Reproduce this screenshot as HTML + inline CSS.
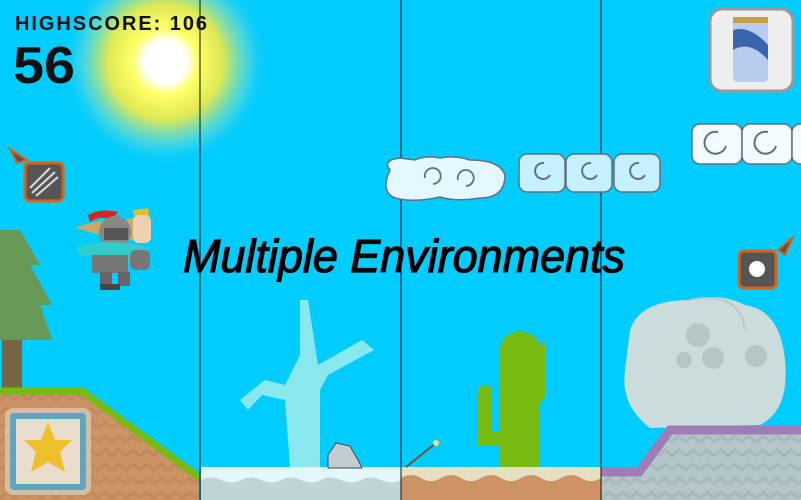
<!DOCTYPE html>
<html><head><meta charset="utf-8"><style>
html,body{margin:0;padding:0;width:801px;height:500px;overflow:hidden;background:#00ccff}
svg{display:block}
</style></head><body>
<svg width="801" height="500" viewBox="0 0 801 500" xmlns="http://www.w3.org/2000/svg">
<defs>
<radialGradient id="sun" cx="165" cy="62" r="105" gradientUnits="userSpaceOnUse">
<stop offset="0" stop-color="#ffffff"/><stop offset="0.2" stop-color="#ffffff"/>
<stop offset="0.32" stop-color="#ffff66"/><stop offset="0.55" stop-color="#dde855"/>
<stop offset="0.8" stop-color="#55d8dd" stop-opacity="0.7"/><stop offset="1" stop-color="#00ccff" stop-opacity="0"/>
</radialGradient>
<pattern id="zzb" width="14" height="14" patternUnits="userSpaceOnUse"><rect width="14" height="14" fill="#cc9466"/><path d="M0 8 L7 2 L14 8" fill="none" stroke="#c08a5c" stroke-width="3"/></pattern>
<pattern id="zzg" width="14" height="14" patternUnits="userSpaceOnUse"><rect width="14" height="14" fill="#b4c6ca"/><path d="M0 8 L7 2 L14 8" fill="none" stroke="#a6b9bd" stroke-width="3"/></pattern>
</defs>
<rect width="801" height="500" fill="#00ccff"/>
<circle cx="165" cy="62" r="105" fill="url(#sun)"/>
<!-- panel 1 -->
<polygon points="0,230 20,230 40,265 30,265 52,305 40,305 52,340 0,340" fill="#669955"/>
<rect x="2" y="340" width="20" height="50" fill="#776644"/>
<polygon points="0,388 82,388 200,475 200,500 0,500" fill="url(#zzb)"/>
<polyline points="0,391 82,391 200,478" fill="none" stroke="#77bb11" stroke-width="7"/>
<rect x="5" y="408" width="86" height="87" rx="8" fill="#d8c8b4" opacity="0.8"/>
<rect x="10" y="413" width="76" height="77" rx="4" fill="#5ea6c0"/>
<rect x="16" y="419" width="64" height="65" fill="#eadccc"/>
<polygon points="48,422 55,440 72,440 60,452 65,472 48,462 31,472 36,452 24,440 41,440" fill="#eec02a"/>
<!-- panel 2 -->
<path d="M300 300 L308 300 L318 365 L362 340 L374 350 L328 375 L320 390 L320 467 L290 467 L285 400 L262 395 L248 410 L240 400 L265 380 L285 385 L300 355 Z" fill="#88e8ee"/>
<rect x="201" y="467" width="200" height="33" fill="#c0d4d8"/>
<path d="M201 467 H401 V480 Q391 485 381 480 Q371 475 361 480 Q351 485 341 480 Q331 475 321 480 Q311 485 301 480 Q291 475 281 480 Q271 485 261 480 Q251 475 241 480 Q231 485 221 480 Q211 475 201 480 Z" fill="#e4f8fc"/>
<polygon points="336,443 350,446 358,460 362,468 328,468 328,455" fill="#c0ced2" stroke="#445" stroke-width="1"/>
<!-- panel 3 -->
<rect x="500" y="332" width="40" height="136" rx="18" fill="#77bb11"/>
<rect x="500" y="350" width="40" height="118" fill="#77bb11"/>
<rect x="478" y="385" width="14" height="60" rx="7" fill="#77bb11"/>
<rect x="478" y="432" width="30" height="14" fill="#77bb11"/>
<rect x="525" y="343" width="20" height="60" rx="8" fill="#77bb11"/>
<rect x="535" y="343" width="10" height="10" fill="#77bb11"/>
<rect x="401" y="467" width="200" height="33" fill="#cc9466"/>
<path d="M401 467 H601 V478 Q591 484 581 478 Q571 472 561 478 Q551 484 541 478 Q531 472 521 478 Q511 484 501 478 Q491 472 481 478 Q471 484 461 478 Q451 472 441 478 Q431 484 421 478 Q411 472 401 478 Z" fill="#e8e0c2"/>
<line x1="406" y1="467" x2="436" y2="443" stroke="#7a5030" stroke-width="2"/>
<circle cx="436" cy="443" r="3" fill="#eedd88"/>
<!-- panel 4 -->
<path d="M630 330 Q640 300 690 300 Q720 292 745 305 Q780 310 785 360 Q790 410 760 425 L650 428 Q620 405 625 370 Z" fill="#cadcdc"/>
<path d="M690 300 Q740 290 745 330" fill="none" stroke="#b8caca" stroke-width="2"/>
<circle cx="698" cy="335" r="12" fill="#b4c6c6"/><circle cx="684" cy="360" r="8" fill="#b4c6c6"/><circle cx="713" cy="358" r="11" fill="#b4c6c6"/><circle cx="756" cy="356" r="11" fill="#b4c6c6"/>
<polygon points="601,468 637,468 668,426 801,426 801,500 601,500" fill="url(#zzg)"/>
<polyline points="601,472 639,472 670,430 801,430" fill="none" stroke="#a07cb6" stroke-width="9"/>
<!-- separators -->
<line x1="200" y1="0" x2="200" y2="500" stroke="#111" stroke-width="1"/>
<line x1="401" y1="0" x2="401" y2="500" stroke="#111" stroke-width="1"/>
<line x1="601" y1="0" x2="601" y2="500" stroke="#111" stroke-width="1"/>
<!-- clouds -->
<g fill="#e6f8ff" stroke="#607080" stroke-width="1.5">
<path d="M390 170 Q382 160 400 158 L415 160 Q425 155 440 158 Q455 155 470 160 Q500 160 505 175 Q505 198 480 198 Q455 202 440 197 Q415 203 395 198 Q380 192 390 170 Z"/>
</g>
<g fill="none" stroke="#607080" stroke-width="1.8">
<path d="M425 178 a8 8 0 1 1 8 6 M458 180 a8 8 0 1 1 8 6"/>
</g>
<g fill="#c4f0ff" stroke="#607080" stroke-width="1.5">
<rect x="519" y="154" width="46" height="38" rx="8"/><rect x="566" y="154" width="46" height="38" rx="8"/><rect x="614" y="154" width="46" height="38" rx="8"/>
</g>
<g fill="#f2fcff" stroke="#607080" stroke-width="1.5">
<rect x="692" y="124" width="50" height="40" rx="8"/><rect x="742" y="124" width="50" height="40" rx="8"/><rect x="792" y="124" width="30" height="40" rx="8"/>
</g>
<g fill="none" stroke="#607080" stroke-width="2">
<path d="M550 175 a8 8 0 1 1 -6 -12 M597 175 a8 8 0 1 1 -6 -12 M645 175 a8 8 0 1 1 -6 -12 M726 146 a11 11 0 1 1 -8 -14 M776 146 a11 11 0 1 1 -8 -14"/>
</g>
<!-- can button -->
<rect x="710" y="9" width="83" height="82" rx="12" fill="#eeeeee" stroke="#999" stroke-width="3"/>
<rect x="733" y="17" width="35" height="65" rx="4" fill="#b8ccee"/>
<rect x="733" y="17" width="35" height="6" fill="#c8a040"/>
<path d="M733 30 Q750 25 768 45 L768 60 Q750 40 733 50 Z" fill="#3a66b0"/>
<!-- orange buttons -->
<polygon points="10,149 27,160 17,163" fill="#555" stroke="#e06010" stroke-width="2"/>
<rect x="25" y="163" width="38" height="38" rx="5" fill="#555" stroke="#e06010" stroke-width="3"/>
<path d="M32 193 L55 172 M36 196 L58 177 M30 188 L50 168" stroke="#ddd" stroke-width="2"/>
<polygon points="793,237 778,250 785,255" fill="#555" stroke="#e06010" stroke-width="2"/>
<rect x="739" y="251" width="37" height="37" rx="5" fill="#555" stroke="#e06010" stroke-width="3"/>
<circle cx="757" cy="269" r="8" fill="#fff"/>
<!-- knight -->
<g>
<path d="M75 228 Q100 218 120 222 L140 215 L150 240 L120 240 Z" fill="#ccaa66"/>
<path d="M88 215 Q100 208 118 212 L112 220 Q100 215 90 222 Z" fill="#dd2222"/>
<circle cx="115" cy="232" r="16" fill="#888"/>
<rect x="104" y="228" width="24" height="12" fill="#555"/>
<path d="M133 210 L148 208 L150 220 L135 218 Z" fill="#ddc030"/>
<rect x="133" y="215" width="18" height="28" rx="6" fill="#f0d0b0"/>
<path d="M76 248 Q100 238 140 245 Q155 250 145 262 Q120 265 80 255 Z" fill="#33cccc"/>
<rect x="92" y="255" width="36" height="18" fill="#777"/>
<rect x="130" y="250" width="20" height="20" rx="6" fill="#777"/>
<rect x="100" y="272" width="12" height="18" fill="#666"/>
<rect x="118" y="272" width="12" height="14" fill="#666"/>
<rect x="100" y="284" width="20" height="6" fill="#444"/>
</g>
<!-- text -->
<text x="15" y="30" font-family="Liberation Sans, sans-serif" font-size="20" font-weight="bold" letter-spacing="2" fill="#111" textLength="194" lengthAdjust="spacingAndGlyphs">HIGHSCORE: 106</text>
<text x="13" y="83" font-family="Liberation Sans, sans-serif" font-size="52" font-weight="bold" fill="#111" textLength="62" lengthAdjust="spacingAndGlyphs">56</text>
<text x="183" y="272" font-family="Liberation Sans, sans-serif" font-style="italic" font-size="46" fill="#000" stroke="#000" stroke-width="1.2" textLength="442" lengthAdjust="spacingAndGlyphs">Multiple Environments</text>
</svg>
</body></html>
